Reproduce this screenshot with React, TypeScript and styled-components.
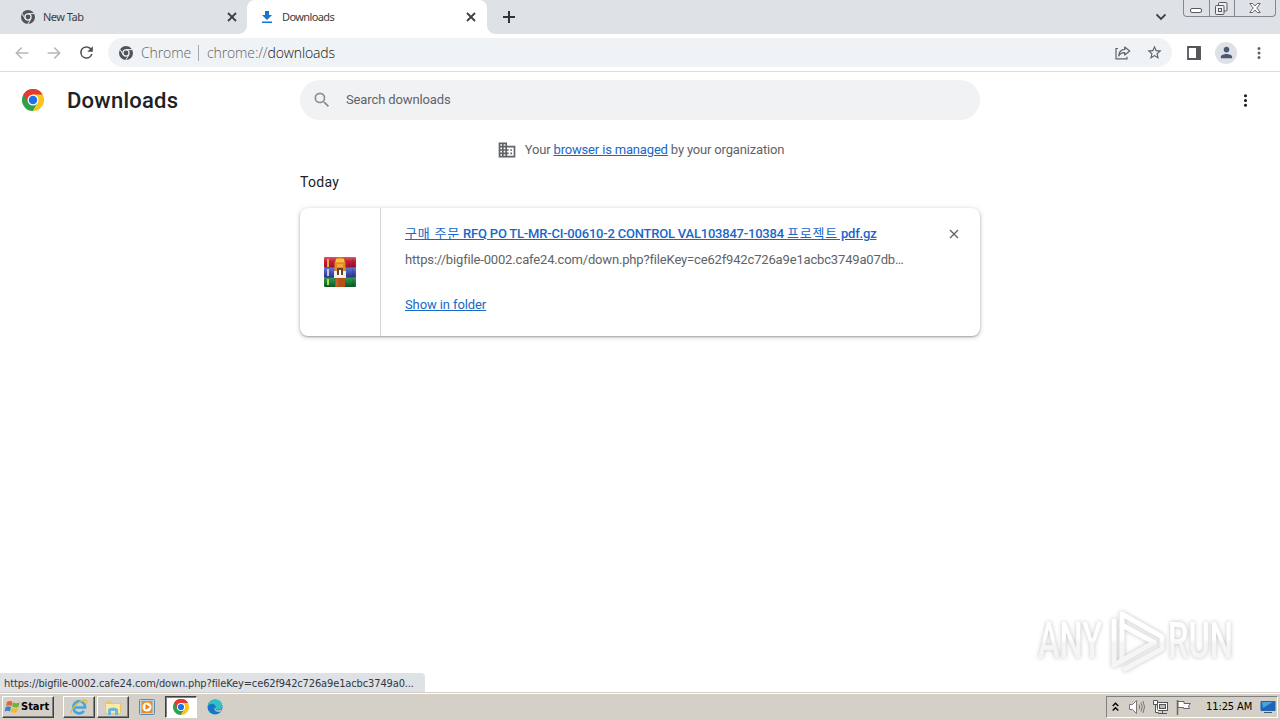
import React from 'react';
import styled, { createGlobalStyle } from 'styled-components';

const Global = createGlobalStyle`
  * { box-sizing: border-box; }
  body { margin: 0; background: #fff; font-family: Roboto, "Noto Sans CJK KR", sans-serif; overflow: hidden; }
  svg { display: block; flex: none; }
`;

const Screen = styled.div`
  position: relative; display: flex; flex-direction: column; width: 1280px; height: 720px; overflow: hidden;
`;
const Text = styled.span<{ $track?: number }>`
  white-space: pre; letter-spacing: ${p => p.$track ?? 0}px;
`;
const Hangul = styled.span`font-weight: 400; letter-spacing: .8px;`;
const Grow = styled.div`flex: 1;`;
const Gap = styled.div<{ $w: number }>`flex: 0 0 ${p => p.$w}px;`;

/* Tab strip */
const TabStrip = styled.div`
  display: flex; height: 34px; background: #dee1e6; flex: none;
  font: 11px/34px "Noto Sans", sans-serif; color: #3c4043;
`;
const Tab = styled.div<{ $active?: boolean }>`
  position: relative; display: flex; align-items: center; height: 34px; gap: 8px;
  width: ${p => (p.$active ? 240 : 247)}px;
  padding: 0 ${p => (p.$active ? 11 : 10)}px 0 ${p => (p.$active ? 13 : 21)}px;
  background: ${p => (p.$active ? '#fff' : 'transparent')};
  border-radius: 8px 8px 0 0;
  ${p => p.$active && `
    &::before, &::after { content: ''; position: absolute; bottom: 0; width: 8px; height: 8px; }
    &::before { left: -8px; background: radial-gradient(circle at 0 0, transparent 7.5px, #fff 8px); }
    &::after { right: -8px; background: radial-gradient(circle at 100% 0, transparent 7.5px, #fff 8px); }
  `}
`;
const NewTabButton = styled.div`padding: 11px 0 0 16px;`;
const TabSearch = styled.div`padding: 13px 17px 0 0;`;
const WindowButtons = styled.div`
  display: flex; height: 17px; width: 93px; margin-right: 4px;
  border: 1px solid #85888f; border-top: 0; border-radius: 0 0 4px 4px;
`;
const WindowButton = styled.div<{ $w: number }>`
  display: flex; justify-content: center; width: ${p => p.$w}px; height: 16px; padding-right: 1px;
  & + & { border-left: 1px solid #85888f; }
`;

/* Toolbar */
const Toolbar = styled.div`
  display: flex; align-items: center; height: 38px; flex: none; padding: 0 12px 0 13px;
  border-bottom: 1px solid #dcdddf; background: #fff;
`;
const NavButtons = styled.div`display: flex; align-items: center; gap: 14px; width: 95px;`;
const Omnibox = styled.div`
  display: flex; align-items: center; width: 1064px; height: 29px; padding: 0 9px 0 11px;
  border-radius: 15px; background: #f0f3f5;
  font: 300 14px/29px "Open Sans", "Noto Sans", sans-serif; color: #5f6368;
  b { font-weight: 300; color: #111418; }
`;
const Chip = styled.div`width: 65px; padding-left: 8px;`;
const Separator = styled.div`width: 1px; height: 16px; margin-right: 8px; background: #a6a9ad;`;
const ToolIcons = styled.div`display: flex; align-items: center; gap: 13px; padding-left: 14px;`;
const Avatar = styled.div`
  display: flex; align-items: center; justify-content: center; width: 22px; height: 22px;
  border-radius: 50%; background: #dee1e6;
`;

/* Downloads page */
const Page = styled.main`flex: 1; display: flex; flex-direction: column; background: #fff;`;
const Header = styled.header`display: flex; align-items: center; height: 56px; padding: 0 25px 0 22px;`;
const Title = styled.h1`
  width: 233px; margin: 2px 0 0 23px; font: 500 22px/32px Roboto, sans-serif; color: #202124;
`;
const SearchField = styled.div`
  display: flex; align-items: center; width: 680px; height: 40px; padding-left: 12px;
  border-radius: 20px; background: #f0f2f4; font-size: 13px; color: #5f6368;
`;
const SearchLabel = styled.div`padding: 0 0 2px 14px;`;
const Content = styled.div`width: 680px; margin: 0 auto;`;
const Managed = styled.div`
  display: flex; align-items: center; justify-content: center; gap: 8px; height: 20px; margin: 12px 0 0 1px;
  font-size: 13px; line-height: 18px; color: #5f6368;
`;
const ManagedText = styled.div`padding-bottom: 1px;`;
const Link = styled.a`color: #1967c8; text-decoration: underline; text-underline-offset: 1px;`;
const DateHeading = styled.h2`margin: 12px 0 15px; font: 400 14px/21px Roboto, sans-serif; color: #202124;`;
const Card = styled.article`
  display: flex; height: 128px; border-radius: 8px; background: #fff;
  box-shadow: 0 1px 2px rgba(60,64,67,.4), 0 1px 4px 1px rgba(60,64,67,.17);
`;
const FileIcon = styled.div`
  display: flex; align-items: center; justify-content: center; width: 81px; border-right: 1px solid #d5d7da;
`;
const Details = styled.div`
  flex: 1; display: flex; flex-direction: column; align-items: flex-start; padding: 16px 0 0 24px;
  font-size: 13px; line-height: 20px;
`;
const FileName = styled(Link)`font-weight: 500;`;
const Source = styled.div`margin: 6px 0 25px; color: #5f6368;`;
const Remove = styled.div`padding: 21px 21px 0 0;`;

/* Overlays */
const StatusBubble = styled.div`
  position: absolute; left: 0; bottom: 28px; width: 425px; height: 19px; padding-left: 4px;
  border-radius: 0 4px 0 0; background: #dee1e6; color: #34373b;
  font: 11px/21px "DejaVu Sans Condensed", "DejaVu Sans", sans-serif; font-stretch: condensed;
`;
const Watermark = styled.div`
  position: absolute; left: 1030px; top: 603px; filter: drop-shadow(0 0 2px rgba(0,0,0,.24));
`;

/* Taskbar */
const Taskbar = styled.footer`
  display: flex; align-items: center; height: 28px; flex: none; padding: 1px 2px 0 2px;
  background: #d4d0c8; border-top: 1px solid #d4d0c8; box-shadow: inset 0 1px 0 #fff;
  font: 11px/20px "DejaVu Sans Condensed", "DejaVu Sans", sans-serif; color: #000;
`;
const StartButton = styled.div`
  display: flex; align-items: center; width: 52px; height: 22px; padding-left: 1px;
  border: 1px solid; border-color: #fff #404040 #404040 #fff; box-shadow: inset -1px -1px #808080;
  font-weight: 700; margin-right: 9px;
`;
const TaskButton = styled.div<{ $kind?: 'raised' | 'pressed' }>`
  display: flex; align-items: center; justify-content: center; height: 22px; width: 32px; margin-right: 2px;
  border: 1px solid transparent;
  ${p => p.$kind === 'raised' && 'border-color: #fff #404040 #404040 #fff; box-shadow: inset -1px -1px #808080;'}
  ${p => p.$kind === 'pressed' && 'border-color: #404040 #fff #fff #404040; background: #fff; box-shadow: inset 1px 1px #808080;'}
`;
const Tray = styled.div`
  display: flex; align-items: center; width: 172px; height: 22px; padding: 0 1px 0 5px;
  border: 1px solid; border-color: #808080 #fff #fff #808080;
`;

const Glyph = ({ d, size = 20, color = '#5f6368' }: { d: string; size?: number; color?: string }) => (
  <svg width={size} height={size} viewBox="0 0 24 24" fill={color}><path d={d} /></svg>
);
const BACK = 'M20.5 11H6.83l5.59-5.59L11 4l-8 8 8 8 1.41-1.41L6.83 13H20.5v-2z';
const FORWARD = 'M3.5 13h13.67l-5.59 5.59L13 20l8-8-8-8-1.41 1.41L17.17 11H3.5v2z';
const RELOAD = 'M17.65 6.35A7.96 7.96 0 0 0 12 4a8 8 0 1 0 7.73 10h-2.08A6 6 0 1 1 12 6c1.66 0 3.14.69 4.22 1.78L13 11h7V4l-2.35 2.35z';
const SEARCH = 'M15.5 14h-.79l-.28-.27A6.47 6.47 0 0 0 16 9.5 6.5 6.5 0 1 0 9.5 16c1.61 0 3.09-.59 4.23-1.57l.27.28v.79l5 4.99L20.49 19l-4.99-5zm-6 0a4.5 4.5 0 1 1 0-9 4.5 4.5 0 0 1 0 9z';
const DOMAIN = 'M12 7V3H2v18h20V7H12zM6 19H4v-2h2v2zm0-4H4v-2h2v2zm0-4H4V9h2v2zm0-4H4V5h2v2zm4 12H8v-2h2v2zm0-4H8v-2h2v2zm0-4H8V9h2v2zm0-4H8V5h2v2zm10 12h-8v-2h2v-2h-2v-2h2v-2h-2V9h8v10zm-2-8h-2v2h2v-2zm0 4h-2v2h2v-2z';
const STAR = 'M22 9.24l-7.19-.62L12 2 9.19 8.63 2 9.24l5.46 4.73L5.82 21 12 17.27 18.18 21l-1.63-7.03L22 9.24zM12 15.4l-3.76 2.27 1-4.28-3.32-2.88 4.38-.38L12 6.1l1.71 4.04 4.38.38-3.32 2.88 1 4.28L12 15.4z';
const PERSON = 'M12 12c2.21 0 4-1.79 4-4s-1.79-4-4-4-4 1.79-4 4 1.79 4 4 4zm0 2c-2.67 0-8 1.34-8 4v2h16v-2c0-2.66-5.33-4-8-4z';
const DOTS = 'M12 8a2 2 0 1 0 0-4 2 2 0 0 0 0 4zm0 2a2 2 0 1 0 0 4 2 2 0 0 0 0-4zm0 6a2 2 0 1 0 0 4 2 2 0 0 0 0-4z';

const Cross = ({ size = 10, color = '#3c4043', weight = 1.8 }: { size?: number; color?: string; weight?: number }) => (
  <svg width={size} height={size} viewBox="0 0 10 10" stroke={color} strokeWidth={weight}><path d="M1 1l8 8M9 1l-8 8" /></svg>
);

const ChromeMono = () => (
  <svg width="14" height="14" viewBox="0 0 14 14">
    <circle cx="7" cy="7" r="7" fill="#505458" />
    <circle cx="7" cy="7" r="3.7" fill="#eceef1" />
    <circle cx="7" cy="7" r="2.4" fill="#505458" />
    <path d="M7 3.6h6.2M4.05 8.7L.95 3.3M9.95 8.7l-3.1 5.3" stroke="#eceef1" strokeWidth="1" />
  </svg>
);

const ChromeColor = ({ size }: { size: number }) => (
  <svg width={size} height={size} viewBox="0 0 48 48">
    <path d="M24 24L3.2 12A24 24 0 0 1 44.8 12z" fill="#e33b2e" />
    <path d="M24 24V48A24 24 0 0 1 3.2 12z" fill="#2da14c" />
    <path d="M34.4 30L24 48 13.6 30z" fill="#2da14c" />
    <path d="M13.6 30L3.2 12 24 12z" fill="#2da14c" />
    <path d="M3.2 12A24 24 0 0 1 44.8 12H24L13.6 18 11 25.5z" fill="#e33b2e" />
    <path d="M34.4 30L24 48A24 24 0 0 0 44.8 12H24z" fill="#fcc31e" />
    <circle cx="24" cy="24" r="12" fill="#fff" />
    <circle cx="24" cy="24" r="9.3" fill="#1a73e8" />
  </svg>
);

const Archive = () => (
  <svg width="34" height="32" viewBox="0 0 34 32">
    <defs>
      <linearGradient id="red" x2="0" y2="1"><stop stopColor="#d95a68" /><stop offset=".4" stopColor="#c51d3c" /><stop offset="1" stopColor="#8d1428" /></linearGradient>
      <linearGradient id="blue" x2="0" y2="1"><stop stopColor="#6378d8" /><stop offset=".5" stopColor="#4050b8" /><stop offset="1" stopColor="#2d3278" /></linearGradient>
      <linearGradient id="green" x2="0" y2="1"><stop stopColor="#359850" /><stop offset=".5" stopColor="#16803c" /><stop offset="1" stopColor="#0b5525" /></linearGradient>
    </defs>
    <rect x="1" y="1" width="32" height="11" rx="1" fill="url(#red)" />
    <rect x="1" y="11.5" width="32" height="10.5" rx="1" fill="url(#blue)" />
    <rect x="1" y="21.5" width="32" height="9.5" rx="1" fill="url(#green)" />
    <path d="M5 3v8" stroke="#f0aa45" strokeWidth="2" /><path d="M5 13v7" stroke="#c5c9dc" strokeWidth="2" /><path d="M5 23v6" stroke="#ccd34a" strokeWidth="2" />
    <path d="M30 3v8M30 13v7M30 23v6" stroke="#401c36" strokeOpacity=".35" />
    <path d="M11.500 6.500q1-5 5.500-5t5.500 5V15h-11z" fill="#e88a1c" />
    <path d="M13 4.500h8" stroke="#ffc03c" strokeWidth="3.500" />
    <path d="M14 8h6v3h-6z" fill="#f2a64c" />
    <path d="M11 15h12v7H11z" fill="#f5efe9" />
    <path d="M14 12h6v7h-6z" fill="#6d4028" /><path d="M16 14h2v7h-2z" fill="#fff" />
    <path d="M12 22h10v9H12z" fill="#b7501b" /><path d="M14 23v7" stroke="#da7830" />
  </svg>
);

const ShareIcon = () => (
  <svg width="18" height="18" viewBox="0 0 18 18" fill="none" stroke="#5f6368" strokeWidth="1.2">
    <path d="M4 4.500H2v10.300h11v-2" /><path d="M10.700 3l5 4-5 4V8.700Q6.500 8.500 4.800 12 5 6 10.700 5.400z" strokeLinejoin="round" />
  </svg>
);

const AnyRunMark = () => (
  <svg width="240" height="90" viewBox="0 0 240 90">
    <defs>
      <linearGradient id="fade" gradientUnits="userSpaceOnUse" x1="0" y1="36" x2="0" y2="40">
        <stop stopColor="#fff" /><stop offset="1" stopColor="#f5f5f5" />
      </linearGradient>
    </defs>
    <g fill="url(#fade)" fontFamily="Roboto, sans-serif" fontWeight="500" fontSize="50">
      <text x="8" y="55" textLength="64" lengthAdjust="spacingAndGlyphs">ANY</text>
      <text x="138" y="55" textLength="65" lengthAdjust="spacingAndGlyphs">RUN</text>
    </g>
    <g fill="none" stroke="url(#fade)" strokeWidth="5" strokeLinejoin="round" strokeLinecap="round">
      <path d="M92 56V11l38 21.500" />
      <path d="M92 22l32 17.500L84 62V18" />
      <path d="M95 66l37-20V34" />
    </g>
  </svg>
);

export default function App() {
  return (
    <Screen>
      <Global />
      <TabStrip>
        <Tab>
          <ChromeMono /><Text $track={-0.5}>New Tab</Text><Grow /><Cross />
        </Tab>
        <Tab $active>
          <svg width="14" height="14" viewBox="0 0 14 14" fill="#1a73d2"><path d="M5 1h4v4h3l-5 5-5-5h3zM2 11.500h10V13H2z" /></svg>
          <Text $track={-0.6}>Downloads</Text><Grow /><Cross />
        </Tab>
        <NewTabButton>
          <svg width="12" height="12" viewBox="0 0 12 12" stroke="#30343a" strokeWidth="2"><path d="M6 0v12M0 6h12" /></svg>
        </NewTabButton>
        <Grow />
        <TabSearch>
          <svg width="10" height="8" viewBox="0 0 10 8" fill="none" stroke="#3c4043" strokeWidth="1.800"><path d="M.5 1.500L5 6l4.500-4.500" /></svg>
        </TabSearch>
        <WindowButtons>
          <WindowButton $w={25}><svg width="13" height="16" fill="#fff" stroke="#55585e"><rect x=".5" y="8.500" width="11" height="4" rx="1.500" /></svg></WindowButton>
          <WindowButton $w={25}>
            <svg width="13" height="16" fill="#eceef2" stroke="#55585e"><rect x="3.500" y="2.500" width="8.500" height="8.500" rx="1" /><rect x=".5" y="5.500" width="8.500" height="9" rx="1" /><rect x="3.500" y="8.500" width="3" height="3" /></svg>
          </WindowButton>
          <WindowButton $w={41}>
            <svg width="12" height="16" fill="#fff" stroke="#55585e" strokeWidth=".9"><path d="M.8 3.500h3L6 6l2.200-2.500h3L7.800 8l3.400 4.500h-3L6 10l-2.200 2.500h-3L4.200 8z" /></svg>
          </WindowButton>
        </WindowButtons>
      </TabStrip>

      <Toolbar>
        <NavButtons>
          <Glyph d={BACK} size={18} color="#b4b6b9" /><Glyph d={FORWARD} size={18} color="#b4b6b9" /><Glyph d={RELOAD} size={19} color="#4c5054" />
        </NavButtons>
        <Omnibox>
          <ChromeMono />
          <Chip><Text $track={-0.1}>Chrome</Text></Chip>
          <Separator />
          <Text $track={-0.12}>chrome://<b>downloads</b></Text>
          <Grow />
          <ShareIcon />
          <Gap $w={14} />
          <Glyph d={STAR} size={17} />
        </Omnibox>
        <ToolIcons>
          <svg width="16" height="14" viewBox="0 0 16 14"><path d="M2 1h12v12H2z" fill="none" stroke="#55575b" strokeWidth="1.800" /><path d="M10 1h4.800v12H10z" fill="#55575b" /></svg>
          <Avatar><Glyph d={PERSON} size={17} color="#4b5775" /></Avatar>
          <Glyph d={DOTS} size={18} />
        </ToolIcons>
      </Toolbar>

      <Page>
        <Header>
          <ChromeColor size={22} />
          <Title><Text $track={0.25}>Downloads</Text></Title>
          <SearchField><Glyph d={SEARCH} color="#8a8d91" /><SearchLabel><Text $track={-0.12}>Search downloads</Text></SearchLabel></SearchField>
          <Grow />
          <Glyph d={DOTS} size={19} color="#202124" />
        </Header>
        <Content>
          <Managed><Glyph d={DOMAIN} /><ManagedText><Text $track={-0.17}>Your <Link>browser is managed</Link> by your organization</Text></ManagedText></Managed>
          <DateHeading><Text $track={0.3}>Today</Text></DateHeading>
          <Card>
            <FileIcon><Archive /></FileIcon>
            <Details>
              <FileName>
                <Text $track={-0.21}><Hangul>구매 주문</Hangul> RFQ PO TL-MR-CI-00610-2 CONTROL VAL103847-10384 <Hangul>프로젝트</Hangul> pdf.gz</Text>
              </FileName>
              <Source><Text $track={-0.16}>https://bigfile-0002.cafe24.com/down.php?fileKey=ce62f942c726a9e1acbc3749a07db…</Text></Source>
              <Link><Text $track={-0.1}>Show in folder</Text></Link>
            </Details>
            <Remove><Cross color="#5f6368" weight={1.3} /></Remove>
          </Card>
        </Content>
      </Page>

      <Taskbar>
        <StartButton>
          <svg width="17" height="16" viewBox="0 0 17 16"><path d="M3 3q3-2 5.500 0L7.500 7Q4 5.500 2 7z" fill="#e8602a" /><path d="M9 3.500q3 1.500 6.500 0L14.500 8q-3 1-6.500-.5z" fill="#6bb33e" /><path d="M1.700 8q3-1.500 5.300 0l-1 4.500q-3-1.500-5.500 0z" fill="#3a83d0" /><path d="M7.700 8.500q3 1.500 6.300.5l-1 4q-3 1.500-6.300-.3z" fill="#f5b929" /></svg>
          <Text>Start</Text>
        </StartButton>
        <TaskButton $kind="raised">
          <svg width="18" height="18" viewBox="0 0 18 18" fill="none"><path d="M14.500 6.500A6 6 0 1 0 14 13M3.500 9.500h11.600q0-1.500-.6-3" stroke="#42a5e2" strokeWidth="2.600" /><path d="M1.500 15Q0 12 7 6q8-6 9.500-3 .5 1-.5 3" stroke="#edba35" strokeWidth="1.400" /></svg>
        </TaskButton>
        <TaskButton $kind="raised">
          <svg width="18" height="18" viewBox="0 0 18 18"><path d="M1 3h6l1 2h9v11H1z" fill="#e8c766" /><path d="M2 6h14v9H2z" fill="#fbe9a6" /><path d="M4 17v-6q5-3 10 0v6h-3v-4H7v4z" fill="#6eb7dd" /></svg>
        </TaskButton>
        <TaskButton>
          <svg width="16" height="16" viewBox="0 0 16 16"><rect x=".5" y=".5" width="15" height="15" rx="1" fill="#b7d7ef" stroke="#4e8fc3" /><rect x="2.500" y="2" width="11" height="12" fill="#f38a1d" /><circle cx="8" cy="8" r="4.500" fill="#fff" /><path d="M6.500 5l4.500 3-4.500 3z" fill="#f07d12" /></svg>
        </TaskButton>
        <TaskButton $kind="pressed"><ChromeColor size={16} /></TaskButton>
        <TaskButton>
          <svg width="16" height="16" viewBox="0 0 17 17"><circle cx="8.500" cy="8.500" r="8" fill="#1478c8" /><path d="M.6 8Q1.500.5 9 .5q7 .5 7.500 7-.5 4-5 4-3 0-2-2.500Q9 5 5 5 2 5 .6 8z" fill="#35bfc4" /><path d="M9.500 9q-2 3 2 3.200 3 0 4.500-1.500l-1.500 2.500q-5 1.300-6.500-1.700Q7.500 9 9.500 9z" fill="#d4d0c8" /></svg>
        </TaskButton>
        <Grow />
        <Tray>
          <svg width="7" height="10" viewBox="0 0 7 10" fill="none" stroke="#000" strokeWidth="1.400"><path d="M.7 4l2.800-2.800L6.300 4M.7 8.500l2.800-2.800 2.800 2.800" /></svg>
          <Gap $w={9} />
          <svg width="18" height="16" viewBox="0 0 18 16" fill="#fff" stroke="#777"><path d="M1.500 5.500h3l4-4v13l-4-4h-3z" /><path d="M11 5.500q1.500 2.500 0 5M13 3.500q2.500 4.500 0 9M15 2q3 6 0 12" fill="none" /></svg>
          <Gap $w={6} />
          <svg width="17" height="16" viewBox="0 0 17 16" fill="#fff" stroke="#555"><rect x="5.500" y="3.500" width="10" height="8" /><rect x="7.500" y="5.500" width="6" height="4" fill="#bbb" /><path d="M6 14.500h9M10.500 12v2" fill="none" /><path d="M1.500 1.500h4v4h-4zM3.500 5.500v8h3" /></svg>
          <Gap $w={7} />
          <svg width="17" height="16" viewBox="0 0 17 16" fill="#fff" stroke="#666"><path d="M1.500 1v15" strokeWidth="1.500" /><path d="M2 2.500h6v2h6.500l-2 2.500 1 2.500H7.500v-1H2z" /></svg>
          <Gap $w={13} />
          <Text $track={-0.1}>11:25 AM</Text>
          <Grow />
          <svg width="16" height="14" viewBox="0 0 16 14"><rect x=".5" y="1" width="15" height="10" rx="1" fill="#1d65b8" /><path d="M2 2h11L3 8z" fill="#4fa0e0" /><path d="M4 12.500h8" stroke="#456" /></svg>
        </Tray>
      </Taskbar>
      <StatusBubble><Text $track={-0.13}>https://bigfile-0002.cafe24.com/down.php?fileKey=ce62f942c726a9e1acbc3749a0...</Text></StatusBubble>
      <Watermark><AnyRunMark /></Watermark>
    </Screen>
  );
}
